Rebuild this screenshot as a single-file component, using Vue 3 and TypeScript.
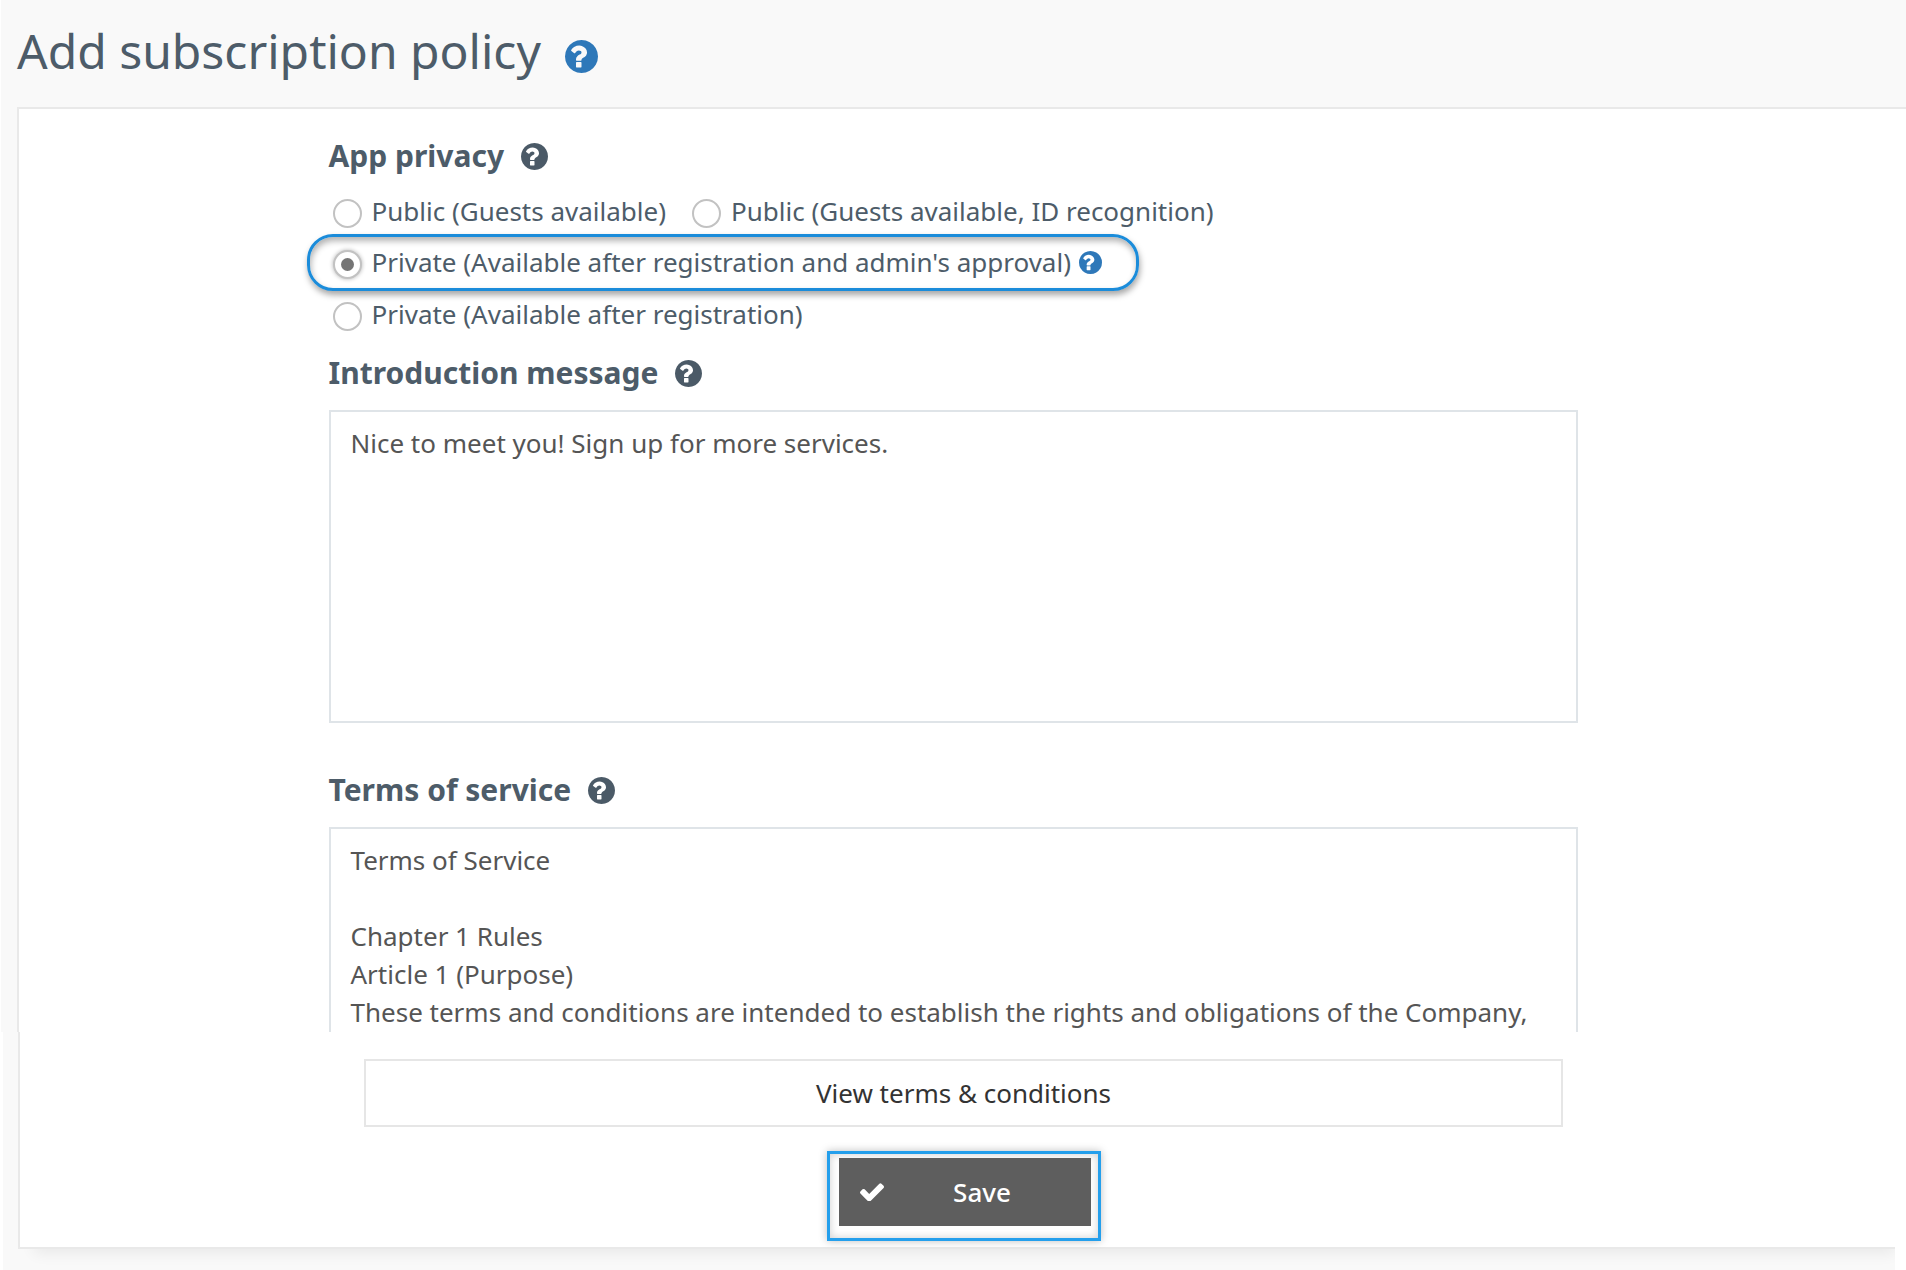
<script setup lang="ts">
import { ref } from 'vue'

type Privacy = 'public' | 'public-id' | 'private-approval' | 'private'

const privacy = ref<Privacy>('private-approval')
const introduction = ref('Nice to meet you! Sign up for more services.')
const terms = ref(
  [
    'Terms of Service',
    '',
    'Chapter 1 Rules',
    'Article 1 (Purpose)',
    'These terms and conditions are intended to establish the rights and obligations of the Company,',
  ].join('\n'),
)

const helpPath =
  'M896 1376v-192q0-14-9-23t-23-9h-192q-14 0-23 9t-9 23v192q0 14 9 23t23 9h192q14 0 23-9t9-23zm256-672q0-88-55.5-163t-138.5-116-170-41q-243 0-371 213-15 24 8 42l132 100q7 6 19 6 16 0 25-12 53-68 86-92 34-24 86-24 48 0 85.5 26t37.5 59q0 38-20 61t-68 45q-63 28-115.5 86.5t-52.5 125.5v36q0 14 9 23t23 9h192q14 0 23-9t9-23q0-19 21.5-49.5t54.5-49.5q32-18 49-28.5t46-35 44.5-48 28-60.5 12.5-81zm512 192q0 209-103 385.5t-279.5 279.5-385.5 103-385.5-103-279.5-279.5-103-385.5 103-385.5 279.5-279.5 385.5-103 385.5 103 279.5 279.5 103 385.5z'
</script>

<template>
  <form class="page" @submit.prevent>
    <div class="upper">
      <header class="title">
        <h1>Add subscription policy</h1>
        <button type="button" class="help help-blue help-large" aria-label="About subscription policies">
          <svg viewBox="128 128 1536 1536"><path :d="helpPath" /></svg>
        </button>
      </header>

      <main class="card">
        <div class="column">
          <div class="heading">
            <h2 id="privacy-heading">App privacy</h2>
            <button type="button" class="help" aria-label="About app privacy">
              <svg viewBox="128 128 1536 1536"><path :d="helpPath" /></svg>
            </button>
          </div>
          <div class="options" role="radiogroup" aria-labelledby="privacy-heading">
            <div class="option-row">
              <label class="option">
                <input v-model="privacy" type="radio" name="privacy" value="public" />
                <span>Public (Guests available)</span>
              </label>
              <label class="option">
                <input v-model="privacy" type="radio" name="privacy" value="public-id" />
                <span>Public (Guests available, ID recognition)</span>
              </label>
            </div>
            <div class="option-row highlighted">
              <label class="option">
                <input v-model="privacy" type="radio" name="privacy" value="private-approval" />
                <span>Private (Available after registration and admin's approval)</span>
              </label>
              <button type="button" class="help help-blue help-small" aria-label="About admin approval">
                <svg viewBox="128 128 1536 1536"><path :d="helpPath" /></svg>
              </button>
            </div>
            <div class="option-row">
              <label class="option">
                <input v-model="privacy" type="radio" name="privacy" value="private" />
                <span>Private (Available after registration)</span>
              </label>
            </div>
          </div>

          <div class="heading">
            <h2><label for="introduction">Introduction message</label></h2>
            <button type="button" class="help" aria-label="About the introduction message">
              <svg viewBox="128 128 1536 1536"><path :d="helpPath" /></svg>
            </button>
          </div>
          <textarea id="introduction" v-model="introduction" class="introduction" rows="7"></textarea>

          <div class="heading">
            <h2><label for="terms">Terms of service</label></h2>
            <button type="button" class="help" aria-label="About the terms of service">
              <svg viewBox="128 128 1536 1536"><path :d="helpPath" /></svg>
            </button>
          </div>
          <textarea id="terms" v-model="terms" class="terms" rows="5"></textarea>
        </div>
      </main>
    </div>

    <div class="lower">
      <footer class="actions">
        <button type="button" class="view">View terms &amp; conditions</button>
        <div class="save-frame">
          <button type="submit" class="save">
            <svg viewBox="121 314 1550 1208">
              <path
                d="M1671 566q0 40-28 68l-724 724-136 136q-28 28-68 28t-68-28l-136-136-362-362q-28-28-28-68t28-68l136-136q28-28 68-28t68 28l294 295 656-657q28-28 68-28t68 28l136 136q28 28 28 68z"
              />
            </svg>
            <span>Save</span>
          </button>
        </div>
      </footer>
    </div>
  </form>
</template>

<style>
body {
  margin: 0;
  background: #ffffff;
}
</style>

<style scoped>
* {
  box-sizing: border-box;
}

.page {
  display: flex;
  flex-direction: column;
  min-height: 100vh;
  font-family: 'Noto Sans', 'Open Sans', sans-serif;
  font-size: 26px;
  line-height: 38px;
  color: #4d5c69;
}

button,
textarea {
  font: inherit;
}

.upper {
  margin-left: 1px;
  padding-left: 16px;
  background: #f9f9f9;
}

.title {
  display: flex;
  align-items: center;
  gap: 24px;
  padding: 19px 0 24px;
}

h1 {
  margin: 0;
  font-size: 48px;
  line-height: 64px;
  font-weight: 400;
}

.help {
  flex: none;
  width: 27px;
  height: 27px;
  padding: 0;
  border: 0;
  background: none;
  color: #4b5a67;
}

.help svg {
  display: block;
  width: 100%;
  fill: currentColor;
}

.help-blue {
  color: #2e78b9;
}

.help-large {
  width: 33px;
  height: 33px;
  margin-top: 10px;
}

.help-small {
  width: 23px;
  height: 23px;
}

.card {
  border: 2px solid #e9e9e9;
  border-right: 0;
  border-bottom: 0;
  padding: 27px 18px 0 0;
  background: #ffffff;
}

.column {
  width: calc(100% / 3 * 2 + 4px);
  margin: 0 auto;
}

.heading {
  display: flex;
  align-items: center;
  gap: 17px;
}

h2 {
  margin: 0;
  font-size: 30px;
  line-height: 40px;
  font-weight: 700;
}

.options {
  display: flex;
  flex-direction: column;
  align-items: flex-start;
  gap: 4px;
  margin: 16px 0 20px;
}

.option-row {
  display: flex;
  align-items: center;
  gap: 26px;
  padding-left: 4px;
}

.option {
  display: flex;
  align-items: center;
  gap: 10px;
}

.option input {
  appearance: none;
  display: grid;
  place-content: center;
  width: 29px;
  height: 29px;
  margin: 4px 0 0;
  border: 2px solid #c2c2c2;
  border-radius: 50%;
  background: #ffffff;
}

.option input:checked {
  box-shadow: 0 0 4px rgba(0, 0, 0, 0.3);
}

.option input:checked::before {
  content: '';
  width: 13px;
  height: 13px;
  border-radius: 50%;
  background: #757575;
}

.highlighted {
  gap: 8px;
  margin-left: -22px;
  padding: 6px 34px 7px 23px;
  border: 3px solid #1b8cda;
  border-radius: 26px;
  box-shadow:
    1px 4px 6px rgba(0, 0, 0, 0.35),
    inset 1px 4px 6px rgba(0, 0, 0, 0.3);
}

textarea {
  display: block;
  width: 100%;
  margin-top: 17px;
  padding: 12px 20px;
  border: 2px solid #dfe4e8;
  border-radius: 0;
  outline: 0;
  resize: none;
  overflow: hidden;
  background: #ffffff;
  color: #555555;
}

.introduction {
  height: 313px;
  margin-bottom: 47px;
}

.terms {
  padding-bottom: 1px;
  border-bottom: 0;
}

.lower {
  flex: 1;
  margin: 0 11px 0 3px;
  padding: 0 0 22px 15px;
  overflow: hidden;
  background: #f9f9f9;
}

.actions {
  display: flex;
  flex-direction: column;
  align-items: center;
  gap: 24px;
  padding: 27px 0 6px 12px;
  border: solid #e9e9e9;
  border-width: 0 0 2px 2px;
  background: #ffffff;
  box-shadow: 8px 12px 14px -8px rgba(0, 0, 0, 0.07);
}

.view {
  width: 64.4%;
  height: 68px;
  border: 2px solid #e6e6e6;
  background: #ffffff;
  color: #333333;
}

.save-frame {
  padding: 4px 7px 12px 9px;
  border: 3px solid #249fec;
  box-shadow:
    0 0 8px rgba(0, 0, 0, 0.25),
    inset 0 0 8px rgba(0, 0, 0, 0.2);
}

.save {
  display: flex;
  align-items: center;
  width: 252px;
  height: 68px;
  padding: 0 10px 0 21px;
  border: 0;
  background: #5e5e5e;
  color: #ffffff;
  font-weight: 500;
}

.save svg {
  width: 24px;
  fill: currentColor;
}

.save span {
  flex: 1;
  text-align: center;
}
</style>
